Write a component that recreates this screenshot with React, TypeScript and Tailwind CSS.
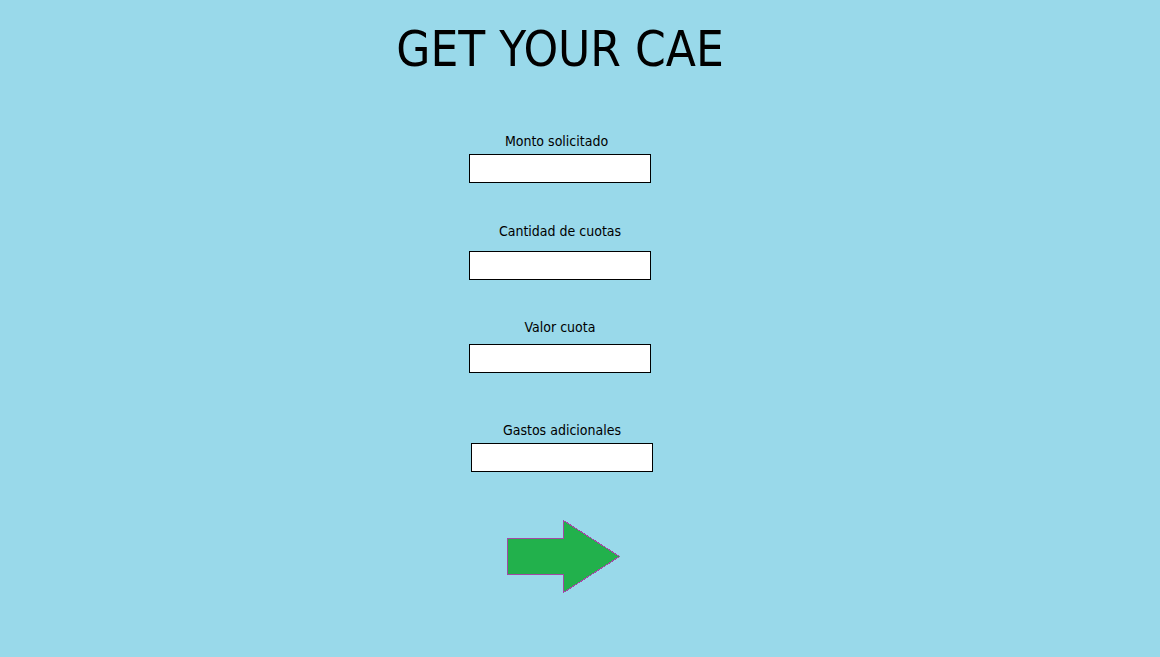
import React, { useState } from "react";

const fields = [
  { label: "Monto solicitado", mt: "mt-[55px]", mb: "mb-[5px]", shift: "ml-0", lshift: "mr-[7px]" },
  { label: "Cantidad de cuotas", mt: "mt-[40px]", mb: "mb-[12px]", shift: "ml-0", lshift: "ml-0" },
  { label: "Valor cuota", mt: "mt-[39px]", mb: "mb-[9px]", shift: "ml-0", lshift: "ml-0" },
  { label: "Gastos adicionales", mt: "mt-[49px]", mb: "mb-[5px]", shift: "ml-[4px]", lshift: "ml-0" },
];

const App: React.FC = () => {
  const [values, setValues] = useState<string[]>(["", "", "", ""]);

  return (
    <div
      className="min-h-screen w-full bg-[#99d9ea] text-black"
      style={{ fontFamily: "'DejaVu Sans Condensed', 'DejaVu Sans', sans-serif" }}
    >
      <div className="w-[1120px] flex flex-col items-center pt-[22px]">
        <h1 className="text-[49px] leading-[56px] font-normal">GET YOUR CAE</h1>

        {fields.map((f, i) => (
          <div key={f.label} className={`${f.mt} ${f.shift} flex flex-col items-center`}>
            <label className={`text-[14px] leading-[16px] ${f.mb} ${f.lshift}`}>{f.label}</label>
            <input
              className="w-[182px] h-[29px] bg-white border border-black outline-none px-1"
              value={values[i]}
              onChange={(e) => {
                const next = [...values];
                next[i] = e.target.value;
                setValues(next);
              }}
            />
          </div>
        ))}

        {/* arrow button */}
        <button className="mt-[47px] ml-[8px]">
          <svg width="116" height="75" viewBox="0 0 116 75" shapeRendering="crispEdges">
            <polygon
              points="1.5,19.5 57.5,19.5 57.5,1.5 113.5,37.5 57.5,73.5 57.5,55.5 1.5,55.5"
              fill="#22b14c"
              stroke="#a349a4"
              strokeWidth="1"
            />
          </svg>
        </button>
      </div>
    </div>
  );
};

export default App;
